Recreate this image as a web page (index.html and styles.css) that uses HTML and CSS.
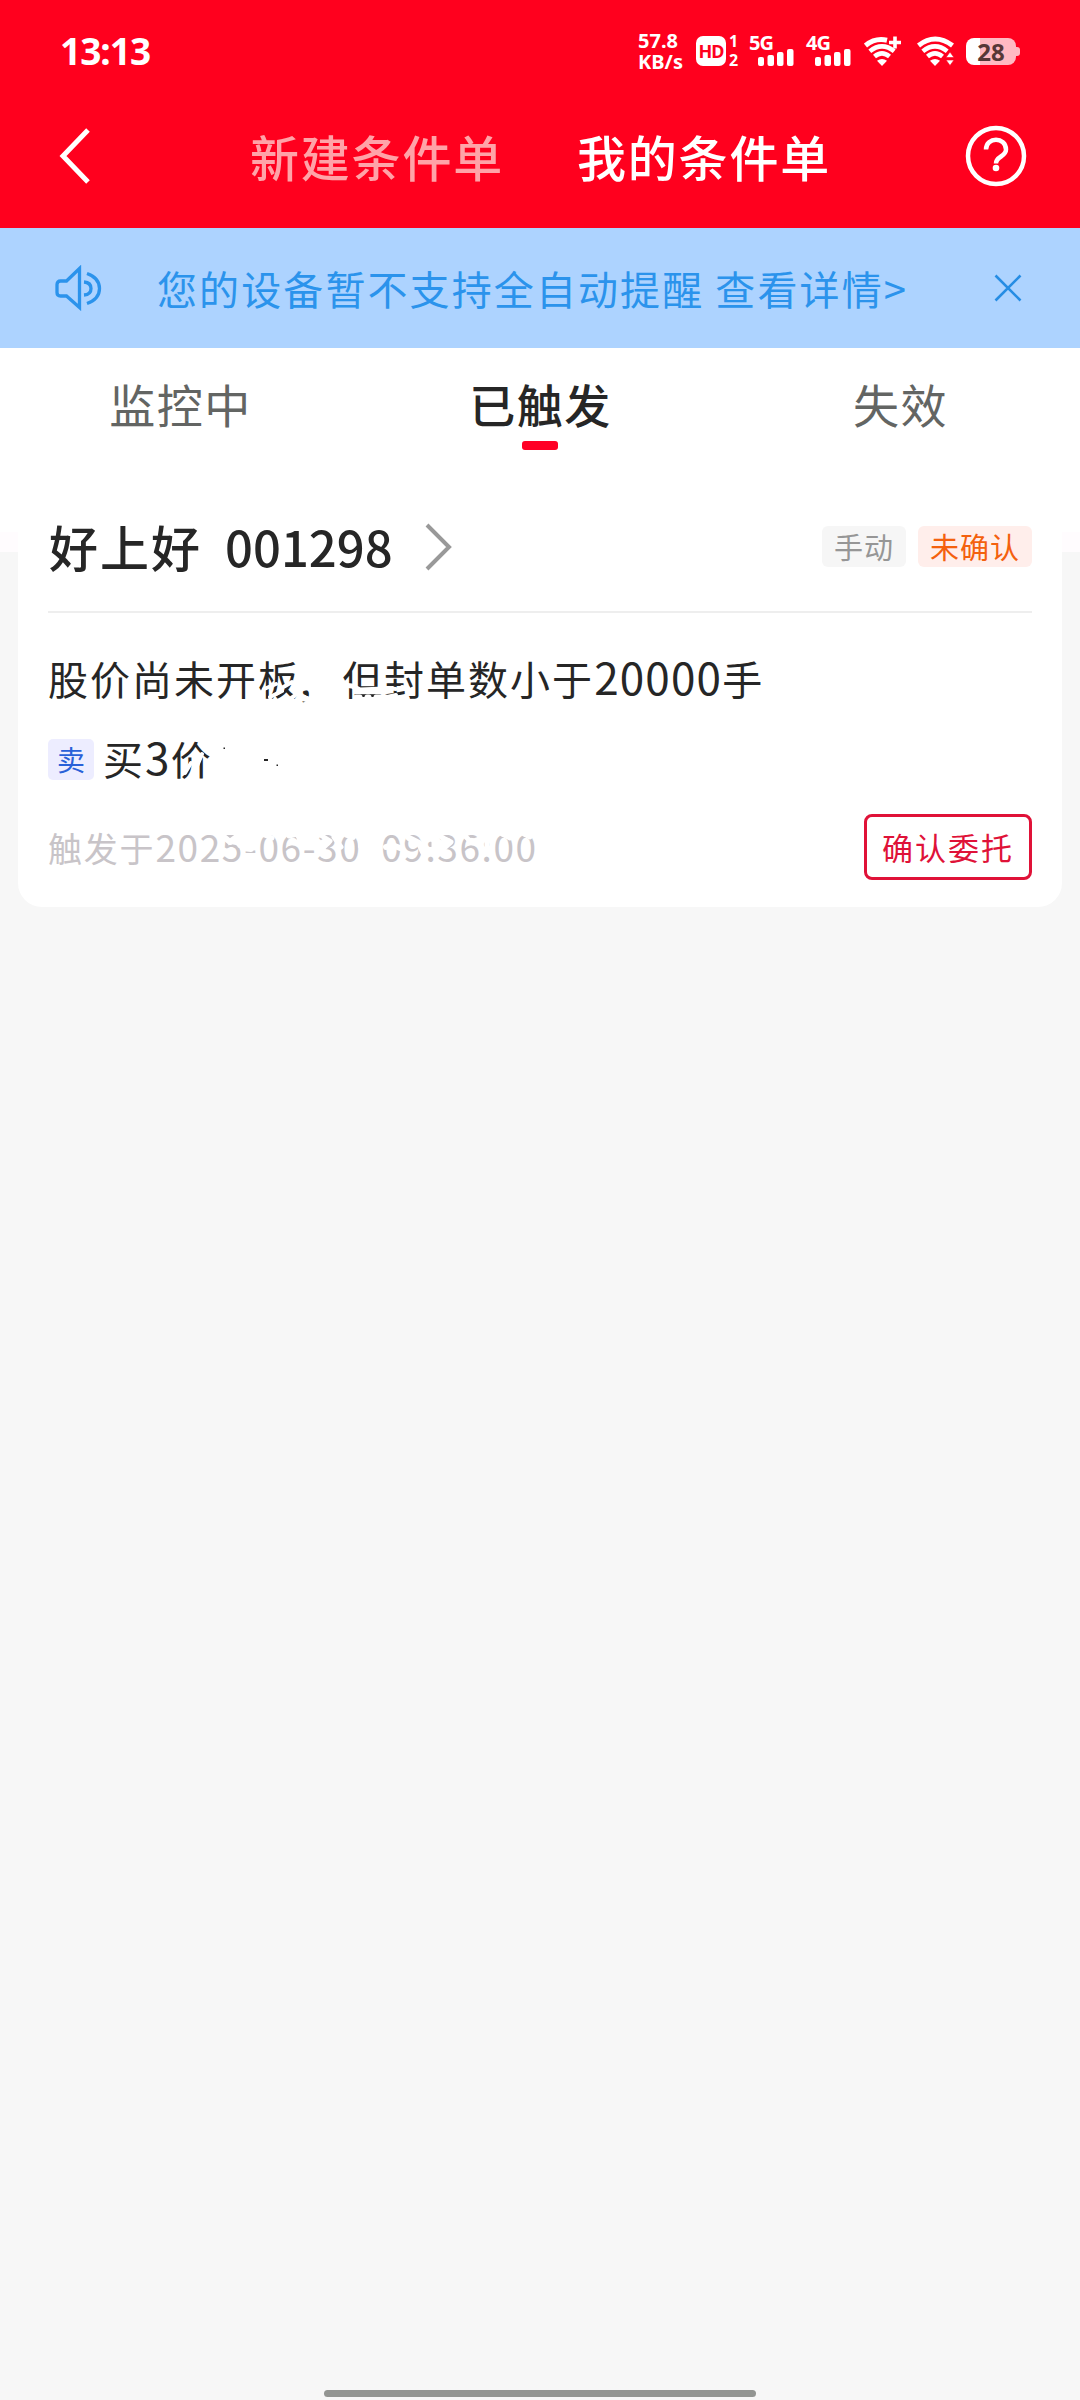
FILE: index.html
```html
<!DOCTYPE html>
<html lang="zh-CN">
<head>
<meta charset="utf-8">
<title>我的条件单</title>
<link rel="stylesheet" href="styles.css">
</head>
<body>
<div class="screen">
  <header class="header">
    <div class="status">
      <span class="clock">13:13</span>
      <div class="status-icons">
        <div class="speed"><span>57.8</span><span>KB/s</span></div>
        <div class="hd"><span class="hd-box">HD</span><span class="hd-sims"><span>1</span><span>2</span></span></div>
        <div class="signal"><span class="net">5G</span>
          <svg class="bars" width="36" height="17" viewBox="0 0 36 17" fill="#fff"><rect x="0" y="8" width="6" height="9" rx="2"/><rect x="9.5" y="6" width="6.500" height="11" rx="2"/><rect x="19" y="3" width="6.500" height="14" rx="2"/><rect x="29" y="0" width="6.500" height="17" rx="2"/></svg>
        </div>
        <div class="signal"><span class="net">4G</span>
          <svg class="bars" width="36" height="17" viewBox="0 0 36 17" fill="#fff"><rect x="0" y="8" width="6" height="9" rx="2"/><rect x="9.5" y="6" width="6.500" height="11" rx="2"/><rect x="19" y="3" width="6.500" height="14" rx="2"/><rect x="29" y="0" width="6.500" height="17" rx="2"/></svg>
        </div>
        <svg class="wifi-plus" width="38" height="30" viewBox="0 0 38 30" fill="none" stroke="#fff"><path d="M1.500 9.500Q11.500 1.500 23 4.300" stroke-width="5"/><path d="M5.800 15.200Q18 5.500 30.200 15.200M10.500 20.500Q18 14.200 25.500 20.500" stroke-width="4.600"/><path d="M13 24.800Q18 21 23 24.800L18 30Z" fill="#fff" stroke="none"/><path d="M31 .5V12.500M25 6.500H37" stroke-width="3.600"/></svg>
        <svg class="wifi" width="38" height="30" viewBox="0 0 38 30" fill="none" stroke="#fff"><path d="M1.500 9.500Q18 -3.500 35.500 9.500" stroke-width="5"/><path d="M5.800 15.200Q18 5.500 30.200 15.200M10.500 20.500Q18 14.200 25.500 20.500" stroke-width="4.600"/><path d="M13 24.800Q18 21 23 24.800L18 30Z" fill="#fff" stroke="none"/><path d="M29 21.500L33 16L37 21.500ZM29 24L33 29.500L37 24Z" fill="#fff" stroke="#ff001e" stroke-width=".6"/></svg>
        <div class="battery"><span>28</span></div>
      </div>
    </div>
    <nav class="nav">
      <svg width="32" height="58" viewBox="0 0 32 58" fill="none" stroke="#fff" stroke-width="5"><path d="M29 3L4 29L29 55"/></svg>
      <div class="nav-tabs"><span class="nav-tab">新建条件单</span><span class="nav-tab active">我的条件单</span></div>
      <svg width="62" height="62" viewBox="0 0 62 62" fill="none" stroke="#fff" stroke-width="4.500"><circle cx="31" cy="31" r="28"/><path d="M21 24.500C21 11.500 41 11.500 41 24.500C41 32 31 31 31 38.500"/><circle cx="31" cy="43" r="3.300" fill="#fff" stroke="none"/></svg>
    </nav>
  </header>

  <div class="notice">
    <svg width="48" height="46" viewBox="0 0 48 46" fill="none" stroke="#2b93ec" stroke-width="3.300"><path d="M25.500 3.500L12.500 16H6.500Q3 16 3 19.500V27.500Q3 31 6.500 31H12.500L25.500 42.500Z"/><path d="M30 17Q37 17.500 37 23.500Q37 29.500 30 30M33 8.500Q45.500 13 45.500 23.500Q45.500 34 33 38.500"/></svg>
    <span class="notice-text">您的设备暂不支持全自动提醒 查看详情&gt;</span>
    <svg width="28" height="28" viewBox="0 0 28 28" stroke="#268de4" stroke-width="2.600"><path d="M1.500 1.500L26.500 26.500M26.500 1.500L1.500 26.500"/></svg>
  </div>

  <div class="tabs">
    <span class="tab">监控中</span><span class="tab current">已触发</span><span class="tab">失效</span>
  </div>

  <main class="content">
    <section class="card">
      <div class="card-head">
        <span class="stock">好上好</span><span class="code">001298</span>
        <svg class="chevron" width="28" height="48" viewBox="0 0 28 48" fill="none" stroke="#999" stroke-width="4"><path d="M3 2L25 24L3 46"/></svg>
        <span class="tag manual">手动</span><span class="tag pending">未确认</span>
      </div>
      <div class="condition">股价尚未开板,<span class="gap"></span>但封单数小于<span class="digits">20000</span>手</div>
      <div class="action"><span class="side">卖</span><span>买<span class="digits">3</span>价</span></div>
      <div class="foot">
        <span class="time">触发于<span class="time-digits">2025-06-30&nbsp; 09:36:00</span></span>
        <button class="confirm">确认委托</button>
      </div>
      <!-- worn patches over the text, and the specks left beside them -->
      <svg class="wear" viewBox="18 497 1044 410" fill="none" stroke="#fff" stroke-linecap="round" stroke-linejoin="round">
        <path d="M248 692V699M264 689L276 684M280 689L292 682L300 690M270 697L282 691M290 699L297 694" stroke-width="4"/>
        <path d="M302 683V688L309 687M302 698L307 699M314 697L318 701" stroke-width="6"/>
        <path d="M343 685L352 686L360 690L384 689M356 697L360 697M367 697L369 697M376 697L386 697" stroke-width="5"/>
        <path d="M386 688L396 689M387 697L396 695M402 687L408 688" stroke-width="4"/>
        <path d="M185 773L191 763M192 778L202 754" stroke-width="4"/>
        <path d="M224 837L230 842L238 836L240 845M243 848L251 849" stroke-width="6"/>
        <path d="M262 834L272 838M289 836L297 834L300 840M322 836L330 841L323 848M334 837L341 847" stroke-width="5"/>
        <path d="M347 835L353 837M361 840V846M386 847L392 845L400 848M409 838L419 843L423 852" stroke-width="6"/>
        <path d="M434 840V850M441 837L451 842L443 849M464 835L471 842L479 839M487 838V845M502 834L510 838M524 834L530 837" stroke-width="5"/>
        <g fill="#262626" stroke="none"><rect x="264" y="759" width="4" height="2"/><rect x="276.500" y="764.500" width="1.500" height="1.500"/><rect x="223.500" y="747.500" width="1.500" height="1.500"/></g>
      </svg>
    </section>
  </main>
  <div class="home-bar"></div>
</div>
</body>
</html>
```
FILE: styles.css
```css
* { box-sizing: border-box; }
body { margin: 0; font-family: "Noto Sans CJK SC", sans-serif; color: #262626; }
svg { display: block; flex: none; }
.screen { width: 1080px; height: 2400px; display: flex; flex-direction: column; background: #f7f7f7; white-space: nowrap; }

.header { height: 228px; background: #ff001e; color: #fff; }
.status { height: 102px; padding: 0 64px 0 60px; display: flex; align-items: center; justify-content: space-between; }
.clock { font: 700 37px/50px "Noto Sans", sans-serif; letter-spacing: -1px; }
.status-icons { display: flex; height: 40px; align-items: center; font-family: "Noto Sans", sans-serif; font-weight: 700; }
.speed { width: 58px; display: flex; flex-direction: column; font-size: 20px; line-height: 21px; letter-spacing: 0; }
.hd { display: flex; width: 53px; height: 30px; gap: 3px; }
.hd-box { width: 30px; height: 30px; border-radius: 7px; background: #fff; color: #ff001e; font-size: 18px; line-height: 30px; text-align: center; letter-spacing: -1px; }
.hd-sims { display: flex; flex-direction: column; margin-top: -4px; font-size: 16px; line-height: 19px; text-align: center; }
.signal { width: 57px; height: 30px; display: flex; flex-direction: column; font-size: 20px; line-height: 14px; }
.net { height: 13px; letter-spacing: -1px; }
.bars { margin-left: 9px; }
.wifi-plus { margin-left: 1px; margin-right: 15px; }
.wifi { margin-right: 11px; }
.battery { position: relative; width: 50px; height: 27px; border-radius: 8px; background: linear-gradient(90deg, #fff 14px, #ffb9c2 14px); color: #573737; text-align: center; font-size: 24px; line-height: 27px; }
.battery::after { content: ""; position: absolute; right: -4px; top: 9px; width: 4px; height: 9px; border-radius: 0 3px 3px 0; background: #ffb9c2; }
.nav { height: 108px; padding: 0 53px 0 59px; display: flex; align-items: center; justify-content: space-between; }
.nav-tabs { display: flex; gap: 73px; margin-left: 25px; }
.nav-tab { font-size: 49px; line-height: 70px; font-weight: 500; letter-spacing: 1.800px; color: #ffa3a8; }
.nav-tab.active { color: #fff; }

.notice { height: 120px; background: #add3ff; color: #2b93ec; padding: 0 58px 0 54px; display: flex; align-items: center; }
.notice-text { flex: 1; margin-left: 55px; font-size: 40px; line-height: 60px; letter-spacing: 2.100px; }

.tabs { height: 149px; background: #fff; padding-top: 20px; display: grid; grid-template-columns: repeat(3, 1fr); }
.tab { display: flex; flex-direction: column; align-items: center; font-size: 46px; line-height: 70px; letter-spacing: 1.500px; text-indent: 1px; color: #636563; }
.tab.current { font-weight: 500; color: #262626; }
.tab.current::after { content: ""; width: 36px; height: 9px; margin-top: 3px; border-radius: 3px; background: #ff0025; }

.content { flex: 1; padding: 0 18px; background: linear-gradient(#fff 35px, #fffcfe 35px, #fffcfe 55px, #f7f7f7 55px); }
.card { position: relative; height: 410px; padding: 0 30px; background: #fff; border-radius: 0 0 24px 24px; }
.card-head { height: 116px; padding-bottom: 15px; border-bottom: 2px solid #eee; display: flex; align-items: center; }
.stock, .code { margin-top: -2px; font-size: 49px; line-height: 70px; font-weight: 500; letter-spacing: 2px; }
.stock { margin-left: 1px; }
.code { margin-left: 23px; letter-spacing: 0; }
.chevron { margin: 0 auto 0 31px; }
.tag { height: 41px; border-radius: 6px; padding: 0 12px; font-size: 29px; line-height: 40px; letter-spacing: 1px; }
.manual { background: #f6f6f6; color: #969696; }
.pending { margin-left: 12px; background: #ffeeeb; color: #f4610e; }
.condition { height: 60px; margin-top: 35px; font-size: 40px; line-height: 60px; letter-spacing: 2px; }
.gap { display: inline-block; width: 29px; }
.digits { font-size: 44px; line-height: 1; letter-spacing: 1.200px; }
.action { margin-top: 20px; height: 60px; display: flex; align-items: center; font-size: 40px; line-height: 60px; letter-spacing: 2px; gap: 9px; }
.side { width: 46px; height: 41px; margin-top: 2px; border-radius: 5px; background: #ededff; color: #2961d8; font-size: 28px; line-height: 40px; letter-spacing: 0; text-align: center; }
.foot { margin-top: 26px; display: flex; align-items: center; justify-content: space-between; }
.time { margin-top: 1px; font-size: 34px; line-height: 60px; letter-spacing: 1.800px; color: #c8c4c8; }
.time-digits { font-size: 37px; line-height: 1; letter-spacing: 1.600px; }
.confirm { width: 168px; height: 66px; border: 3px solid #e01238; border-radius: 8px; background: #fff; color: #df1238; font: 400 31px/56px "Noto Sans CJK SC", sans-serif; letter-spacing: 2px; padding: 0; }
.wear { position: absolute; left: 0; top: 0; width: 1044px; height: 410px; pointer-events: none; }
.home-bar { width: 432px; height: 7px; margin: 0 auto 3px; border-radius: 4px; background: #939592; }
```
